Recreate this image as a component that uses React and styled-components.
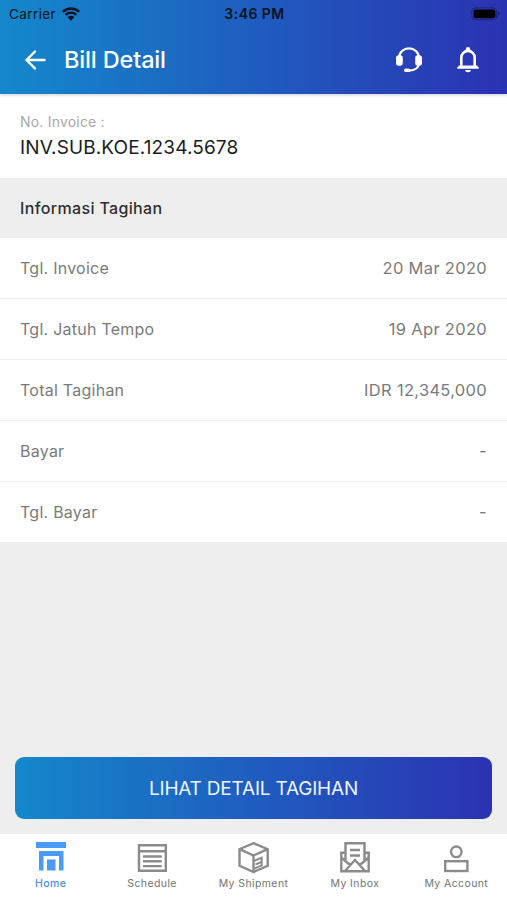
import styled, { createGlobalStyle } from "styled-components";

const GlobalStyle = createGlobalStyle`
  * {
    box-sizing: border-box;
  }

  body {
    margin: 0;
    font-family: Inter, "Liberation Sans", sans-serif;
  }
`;

const Screen = styled.div`
  display: flex;
  flex-direction: column;
  height: 900px;
  background-color: #eeeeee;
`;

const Header = styled.header`
  height: 94px;
  flex-shrink: 0;
  background: linear-gradient(to right, #1488cc, #2b32b2);
  box-shadow: 0 1px 3px rgba(0, 0, 0, 0.2);
  z-index: 1;
`;

const StatusBar = styled.div`
  display: grid;
  grid-template-columns: 1fr auto 1fr;
  align-items: center;
  height: 27px;
  padding: 0 7px 0 9px;
  color: #0a1420;
`;

const Carrier = styled.div`
  display: flex;
  align-items: center;
  gap: 6px;
  font-size: 13.5px;
  letter-spacing: 0.4px;
`;

const Clock = styled.div`
  font-size: 14px;
  font-weight: 600;
  letter-spacing: 0.45px;
`;

const Battery = styled.svg`
  justify-self: end;
`;

const Toolbar = styled.div`
  display: flex;
  align-items: center;
  height: 66px;
  padding: 0 27px 0 24px;
  color: #fff;
`;

const Title = styled.h1`
  flex: 1;
  margin: 0 0 2px 18px;
  font-size: 23.5px;
  font-weight: 500;
  letter-spacing: -0.15px;
`;

const ToolbarActions = styled.div`
  display: flex;
  align-items: center;
  gap: 33px;
`;

const Invoice = styled.section`
  height: 84px;
  padding: 19px 20px 0;
  background-color: #fff;
`;

const InvoiceLabel = styled.div`
  color: #a8a8a8;
  font-size: 14px;
  line-height: 18px;
  letter-spacing: 0.2px;
`;

const InvoiceNumber = styled.div`
  margin-top: 5px;
  color: #1c1c1c;
  font-size: 19px;
  line-height: 24px;
  letter-spacing: 0.12px;
`;

const SectionTitle = styled.h2`
  display: flex;
  align-items: center;
  height: 60px;
  margin: 0;
  padding: 0 20px 1px;
  color: #2e2e2e;
  font-size: 16px;
  font-weight: 500;
  letter-spacing: 0.35px;
`;

const Row = styled.div`
  display: flex;
  align-items: center;
  justify-content: space-between;
  height: 61px;
  padding: 0 20px 1px;
  background-color: #fff;
  border-bottom: 1px solid #efefef;
  color: #7b7b7b;
  font-size: 16px;
  letter-spacing: 0.25px;
`;

const RowValue = styled.span`
  font-size: 16.5px;
  letter-spacing: 0.3px;
`;

const Footer = styled.div`
  margin-top: auto;
  padding: 0 15px 15px;
`;

const DetailButton = styled.button`
  width: 100%;
  height: 62px;
  border: none;
  border-radius: 9px;
  background: linear-gradient(to right, #1488cc, #2b32b2);
  color: #eef4ff;
  font-family: inherit;
  font-size: 19px;
  letter-spacing: -0.2px;
`;

const TabBar = styled.nav`
  display: grid;
  grid-template-columns: repeat(5, 1fr);
  height: 66px;
  flex-shrink: 0;
  background-color: #fff;
`;

const Tab = styled.div`
  display: flex;
  flex-direction: column;
  align-items: center;
  padding-top: 7px;
  color: ${(props) => (props.$active ? "#4a9bf8" : "#8b8b8b")};
`;

const TabLabel = styled.span`
  margin-top: 3px;
  color: ${(props) => (props.$active ? "#4a8fe0" : "#747474")};
  font-size: 10.5px;
  font-weight: ${(props) => (props.$active ? 500 : 400)};
  line-height: 14px;
  letter-spacing: 0.4px;
  white-space: nowrap;
`;

const TabIcon = styled.svg`
  width: 32px;
  height: 33px;
  fill: none;
  stroke: currentColor;
  stroke-width: 2.4;
`;

const WifiIcon = () => (
  <svg width="18" height="14" viewBox="0 0 18 14">
    <path
      d="M0.9 4.8a11.6 11.6 0 0 1 16.2 0M3.7 7.8a7.6 7.6 0 0 1 10.6 0"
      fill="none"
      stroke="currentColor"
      strokeWidth="2.4"
    />
    <path d="M5.6 10.2a4.9 4.9 0 0 1 6.8 0L9 13.8z" fill="currentColor" />
  </svg>
);

const BatteryIcon = () => (
  <Battery width="30" height="14" viewBox="0 0 30 14">
    <rect
      x="1.8"
      y="0.8"
      width="25"
      height="12"
      rx="3.5"
      fill="none"
      stroke="#10134a"
      strokeOpacity="0.5"
    />
    <rect x="3.5" y="2.5" width="21.8" height="8.8" rx="2" fill="#000" />
    <path d="M28.2 4.8c1.6.5 1.6 3.5 0 4z" fill="#10134a" fillOpacity="0.6" />
  </Battery>
);

const BackIcon = () => (
  <svg
    width="22"
    height="22"
    viewBox="0 0 22 22"
    fill="none"
    stroke="currentColor"
    strokeWidth="2.4"
    strokeLinecap="round"
    strokeLinejoin="round"
  >
    <path d="M11 2.5L2.5 11l8.5 8.5M2.5 11h18" />
  </svg>
);

const HeadsetIcon = () => (
  <svg width="28" height="28" viewBox="0 0 28 28">
    <path
      d="M4.2 13V11.5a9.8 9.2 0 0 1 19.6 0v5.5c0 4.4-3.5 7.6-9.8 7.6"
      fill="none"
      stroke="currentColor"
      strokeWidth="2.3"
    />
    <rect x="1" y="9.2" width="6.8" height="10.6" rx="2.8" fill="currentColor" />
    <rect x="20.2" y="9.2" width="6.8" height="10.6" rx="2.8" fill="currentColor" />
    <rect x="9" y="22.4" width="6.2" height="3.6" rx="1.8" fill="currentColor" />
  </svg>
);

const BellIcon = () => (
  <svg width="24" height="28" viewBox="0 0 24 28">
    <path
      d="M5.3 21V11.5a6.7 6.6 0 0 1 13.4 0v9.5"
      fill="none"
      stroke="currentColor"
      strokeWidth="2.6"
    />
    <path
      d="M1.2 22.8v-1.4l2-1.8h17.6l2 1.8v1.4zM9.8 4.6V3.3a2.2 2.2 0 0 1 4.4 0v1.3zM9.2 24h5.6a2.8 2.2 0 0 1-5.6 0z"
      fill="currentColor"
    />
  </svg>
);

const HomeIcon = () => (
  <TabIcon viewBox="0 0 32 33">
    <path
      d="M1 1h30v6H1zM4 10h24.5v19.5H24V15H8.5v14.5H4zM12 18.5h8.5v11H12z"
      fill="currentColor"
      stroke="none"
    />
  </TabIcon>
);

const ScheduleIcon = () => (
  <TabIcon viewBox="0 0 32 33">
    <path d="M3 4.2h26.8v25.6H3zM3 10.2h26.8M7 15.5h18.8M7 20.3h18.8M7 25.1h18.8" />
  </TabIcon>
);

const ShipmentIcon = () => (
  <TabIcon viewBox="0 0 32 33">
    <path d="M16.5 2.2l14.2 6v16.6L16.5 31 2.5 24.8V8.2zM2.5 8.2l14 6.3 14.2-6.3M16.5 14.5V31" />
    <path d="M17.3 19.8l7.4-3v7.6l-7.4 3.2M18.5 23.4l6-2.4" strokeWidth="2" />
  </TabIcon>
);

const InboxIcon = () => (
  <TabIcon viewBox="0 0 32 33">
    <path d="M6.5 20.2V2.3h19v17.9M6.5 11.8H2.3v18.4h27.4V11.8h-4.2M2.3 16.5l8.8 7.5M29.7 16.5L20.9 24M6 30l10-11 10 11M11 9h10M11 14.5h10" />
  </TabIcon>
);

const AccountIcon = () => (
  <TabIcon viewBox="0 0 32 33">
    <circle cx="16.3" cy="10.8" r="5.3" />
    <rect x="5.2" y="20.2" width="22.2" height="9.8" />
  </TabIcon>
);

const rows = [
  { label: "Tgl. Invoice", value: "20 Mar 2020" },
  { label: "Tgl. Jatuh Tempo", value: "19 Apr 2020" },
  { label: "Total Tagihan", value: "IDR 12,345,000" },
  { label: "Bayar", value: "-" },
  { label: "Tgl. Bayar", value: "-" },
];

const tabs = [
  { label: "Home", Icon: HomeIcon },
  { label: "Schedule", Icon: ScheduleIcon },
  { label: "My Shipment", Icon: ShipmentIcon },
  { label: "My Inbox", Icon: InboxIcon },
  { label: "My Account", Icon: AccountIcon },
];

export default function App() {
  return (
    <Screen>
      <GlobalStyle />
      <Header>
        <StatusBar>
          <Carrier>
            Carrier
            <WifiIcon />
          </Carrier>
          <Clock>3:46 PM</Clock>
          <BatteryIcon />
        </StatusBar>
        <Toolbar>
          <BackIcon />
          <Title>Bill Detail</Title>
          <ToolbarActions>
            <HeadsetIcon />
            <BellIcon />
          </ToolbarActions>
        </Toolbar>
      </Header>
      <Invoice>
        <InvoiceLabel>No. Invoice :</InvoiceLabel>
        <InvoiceNumber>INV.SUB.KOE.1234.5678</InvoiceNumber>
      </Invoice>
      <SectionTitle>Informasi Tagihan</SectionTitle>
      {rows.map((row) => (
        <Row key={row.label}>
          <span>{row.label}</span>
          <RowValue>{row.value}</RowValue>
        </Row>
      ))}
      <Footer>
        <DetailButton>LIHAT DETAIL TAGIHAN</DetailButton>
      </Footer>
      <TabBar>
        {tabs.map(({ label, Icon }, i) => (
          <Tab key={label} $active={i === 0}>
            <Icon />
            <TabLabel $active={i === 0}>{label}</TabLabel>
          </Tab>
        ))}
      </TabBar>
    </Screen>
  );
}
